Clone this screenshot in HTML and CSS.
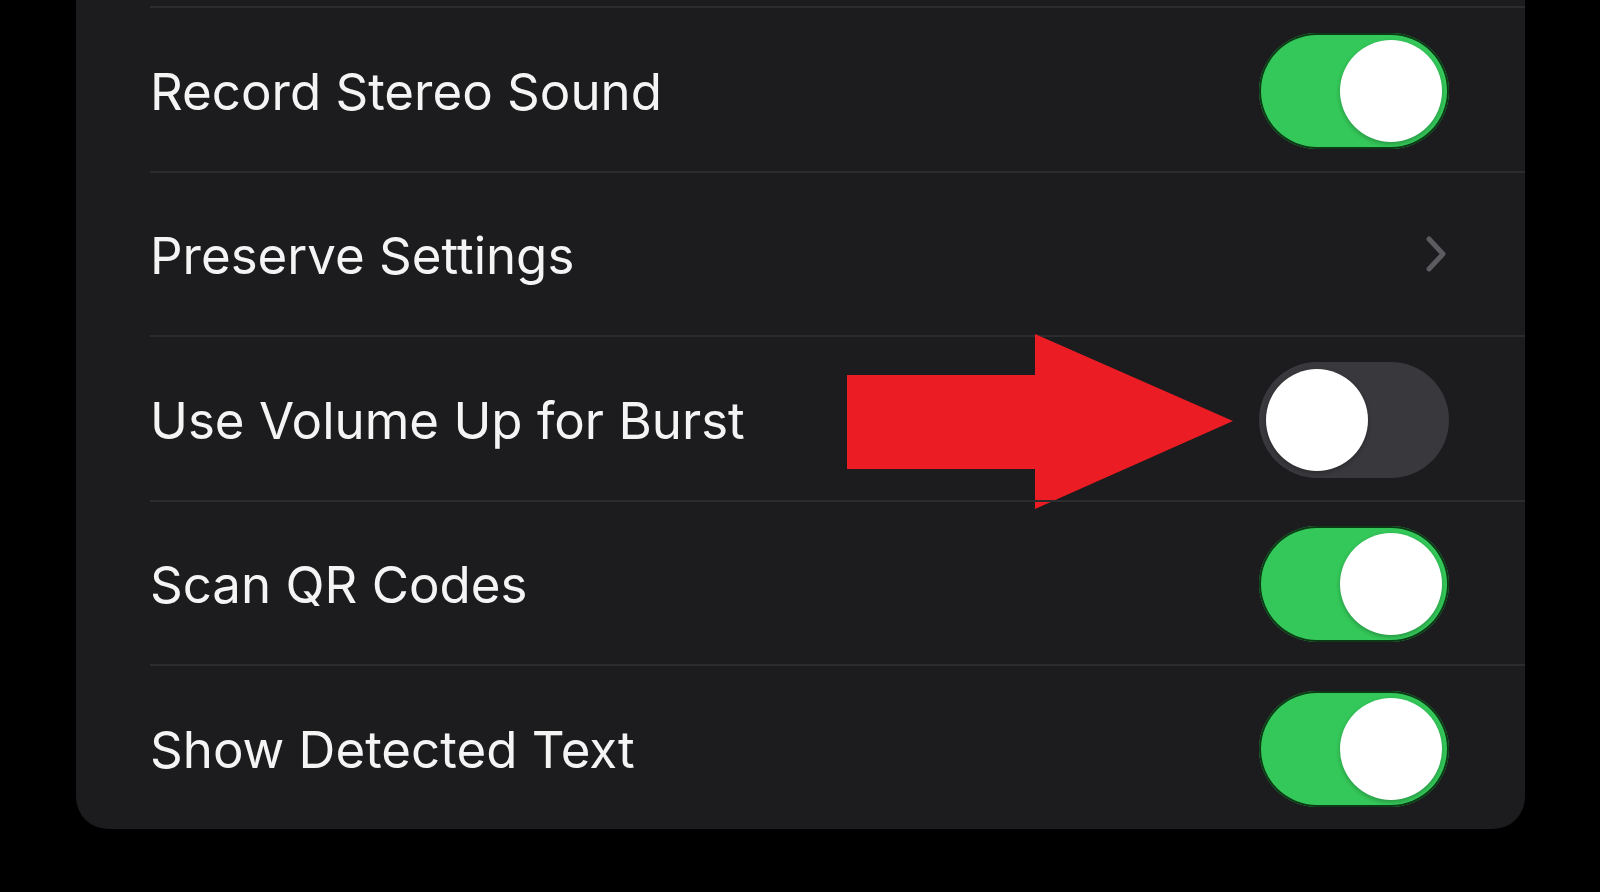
FILE: index.html
```html
<!DOCTYPE html>
<html lang="en">
<head>
<meta charset="utf-8">
<title>Camera Settings</title>
<link rel="stylesheet" href="styles.css">
</head>
<body>
<div class="page">
  <div class="card">
    <div class="row">
      <span class="label">Record Stereo Sound</span>
      <span class="toggle on"><span class="knob"></span></span>
    </div>
    <div class="row">
      <span class="label">Preserve Settings</span>
      <svg class="chevron" viewBox="0 0 22 38" width="22" height="38"><path d="M4 4 L18 19 L4 34" fill="none" stroke="#5b5b60" stroke-width="5" stroke-linecap="round" stroke-linejoin="round"/></svg>
    </div>
    <div class="row">
      <span class="label">Use Volume Up for Burst</span>
      <span class="toggle off"><span class="knob"></span></span>
      <svg class="arrow" viewBox="0 0 390 178" width="390" height="178"><polygon points="0,41 188,41 188,0 386,87 188,175 188,135 0,135" fill="#ec1c24"/></svg>
    </div>
    <div class="row">
      <span class="label">Scan QR Codes</span>
      <span class="toggle on"><span class="knob"></span></span>
    </div>
    <div class="row">
      <span class="label">Show Detected Text</span>
      <span class="toggle on"><span class="knob"></span></span>
    </div>
  </div>
</div>
</body>
</html>
```
FILE: styles.css
```css
html, body {
  margin: 0;
  padding: 0;
  background: #000;
  height: 100%;
  overflow: hidden;
}
.page {
  padding: 6px 75px 0 76px;
}
.card {
  background: #1c1c1e;
  border-radius: 0 0 32px 32px;
  margin-top: -6px;
  padding-top: 6px;
  padding-left: 74px;
}
.row {
  position: relative;
  height: 162.5px;
  border-top: 2px solid #2c2c2f;
  display: flex;
  align-items: center;
  justify-content: space-between;
  padding-right: 76px;
}
.label {
  font-family: Inter, "Noto Sans", sans-serif;
  font-size: 51px;
  color: #f4f4f4;
  padding-top: 4px;
}
.toggle {
  width: 190px;
  height: 116px;
  border-radius: 58px;
  box-sizing: border-box;
  padding: 7px;
  display: flex;
  margin-top: 3px;
}
.toggle.on {
  background: #34c759;
  justify-content: flex-end;
  box-shadow: 0 0 0 2px #0c3a16 inset;
}
.toggle.off {
  background: #39393d;
  justify-content: flex-start;
}
.knob {
  width: 102px;
  height: 102px;
  border-radius: 50%;
  background: #fff;
  box-shadow: 0 2px 4px rgba(0,0,0,0.25);
}
.chevron {
  margin-right: 2px;
}
.arrow {
  position: absolute;
  left: 697px;
  top: -3px;
}
```
